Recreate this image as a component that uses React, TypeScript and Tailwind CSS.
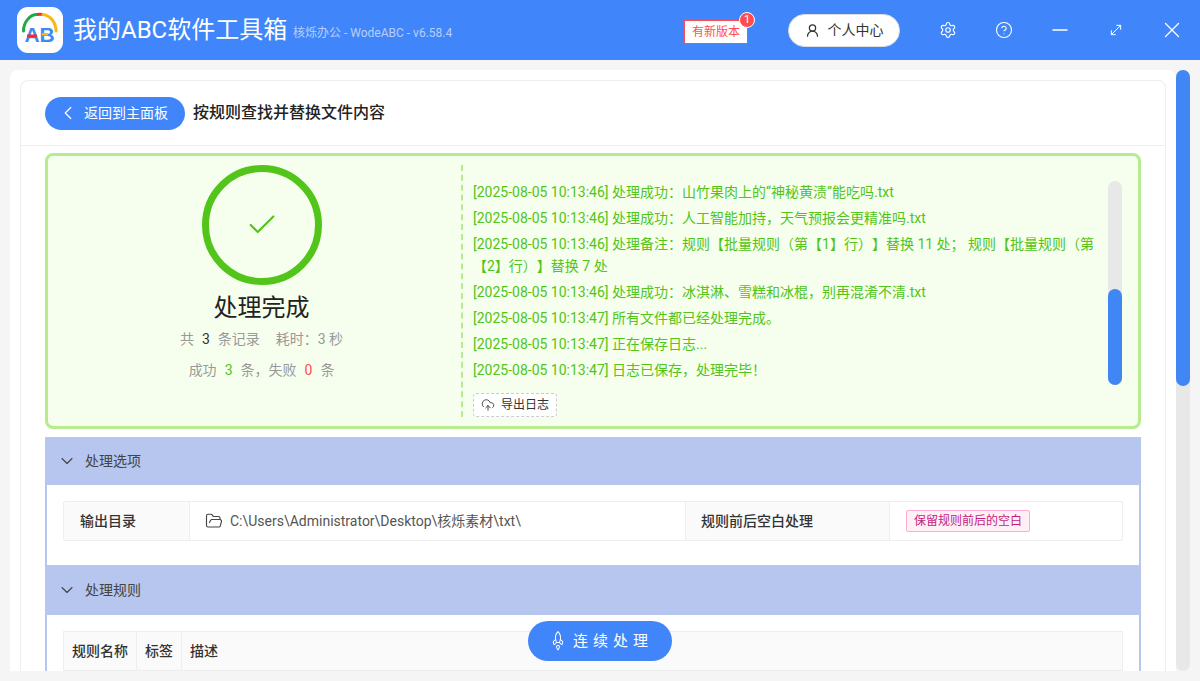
import React from "react";
import {
  ChevronDown,
  ChevronLeft,
  CircleHelp,
  CloudUpload,
  FolderOpen,
  Minus,
  MoveDiagonal,
  Rocket,
  Settings,
  Check,
  UserRound,
  X,
} from "lucide-react";

const font = "font-['Roboto','Noto_Sans_CJK_SC',sans-serif] [text-spacing-trim:space-all]";

const logs = [
  "[2025-08-05 10:13:46] 处理成功：山竹果肉上的“神秘黄渍”能吃吗.txt",
  "[2025-08-05 10:13:46] 处理成功：人工智能加持，天气预报会更精准吗.txt",
  "[2025-08-05 10:13:46] 处理备注：规则【批量规则（第【1】行）】替换 11 处； 规则【批量规则（第【2】行）】替换 7 处",
  "[2025-08-05 10:13:46] 处理成功：冰淇淋、雪糕和冰棍，别再混淆不清.txt",
  "[2025-08-05 10:13:47] 所有文件都已经处理完成。",
  "[2025-08-05 10:13:47] 正在保存日志...",
  "[2025-08-05 10:13:47] 日志已保存，处理完毕！",
];

const Logo = () => (
  <div className="h-[46px] w-[46px] shrink-0 rounded-[11px] bg-white">
    <svg viewBox="0 0 46 46" className="h-full w-full">
      <path d="M6.500 24C6.500 15 13 7.500 20 7.500" fill="none" stroke="#22a846" strokeWidth="3" strokeLinecap="round" />
      <path d="M20 7.500C22 7.200 24 7.200 26 7.500" fill="none" stroke="#e5342b" strokeWidth="3" />
      <path d="M26 7.500C33 8.500 39 15 39 24" fill="none" stroke="#f6b81a" strokeWidth="3" strokeLinecap="round" />
      <text x="7.500" y="35" fontSize="21" fontWeight="700" fontFamily="Liberation Sans" fill="#3d8bf2">A</text>
      <text x="22.500" y="35" fontSize="21" fontWeight="700" fontFamily="Liberation Sans" fill="#3d8bf2">B</text>
      <rect x="10" y="27.500" width="10" height="3" fill="#ef2b2b" />
      <rect x="25" y="26" width="6" height="2.500" fill="#f6b81a" />
    </svg>
  </div>
);

const Section = ({
  title,
  headerClass,
  children,
}: {
  title: string;
  headerClass: string;
  children: React.ReactNode;
}) => (
  <div className="border-x-2 border-[#b6c6ee] bg-white">
    <div className={`-mx-[2px] flex items-center gap-[8px] bg-[#b6c6ee] pl-[12px] text-[14px] text-[#444] ${headerClass}`}>
      <ChevronDown className="h-[20px] w-[20px]" strokeWidth={1.3} />
      {title}
    </div>
    {children}
  </div>
);

export default function App() {
  return (
    <div className={`${font} flex h-[681px] w-[1200px] flex-col overflow-hidden bg-[#f5f5f5]`}>
      {/* Title bar */}
      <header className="flex h-[60px] shrink-0 items-center bg-[#4086fa] pl-[17px] text-white">
        <Logo />
        <span className="ml-[10px] w-[212px] whitespace-nowrap text-[24px]">我的ABC软件工具箱</span>
        <span className="ml-[8px] mt-[6px] w-[164px] whitespace-nowrap text-[12px] text-[#b9cffa]">核烁办公 - WodeABC - v6.58.4</span>
        <div className="relative ml-[227px] mt-[4px] flex h-[24px] w-[64px] items-center justify-center border border-[#ff4d4f] bg-white text-[12px] text-[#ff4d4f]">
          有新版本
          <span className="absolute -right-[8px] -top-[9px] flex h-[16px] w-[16px] items-center justify-center rounded-full border border-white bg-[#ff4d4f] text-[11px] text-white">
            1
          </span>
        </div>
        <button className="ml-[40px] flex h-[33px] w-[112px] items-center justify-center gap-[8px] rounded-full border border-[#ddd] bg-white text-[14px] text-[#333]">
          <UserRound className="h-[15px] w-[15px]" />
          个人中心
        </button>
        <div className="ml-[20px] flex items-center">
          <div className="flex w-[56px] justify-center">
            <Settings className="h-[18px] w-[18px]" strokeWidth={1.5} />
          </div>
          <div className="flex w-[56px] justify-center">
            <CircleHelp className="h-[18px] w-[18px]" strokeWidth={1.5} />
          </div>
          <div className="flex w-[56px] justify-center">
            <Minus className="h-[24px] w-[24px]" strokeWidth={1.5} />
          </div>
          <div className="flex w-[56px] justify-center">
            <MoveDiagonal className="h-[16px] w-[16px]" strokeWidth={1.5} />
          </div>
          <div className="flex w-[56px] justify-center">
            <X className="h-[26px] w-[26px]" strokeWidth={1.2} />
          </div>
        </div>
      </header>

      <div className="flex min-h-0 flex-1 pl-[10px] pt-[10px] pb-[10px]">
        {/* Main panel */}
        <div className="relative w-[1166px] overflow-hidden rounded-t-[8px] bg-white pl-[10px] pt-[10px]">
          <div className="h-full w-[1146px] rounded-t-[8px] border-x border-t border-[#eee]">
            <div className="flex h-[65px] items-center border-b border-[#eee] pl-[24px]">
              <button className="flex h-[33px] w-[140px] items-center gap-[5px] rounded-full bg-[#4086fa] pl-[12px] text-[14px] text-white">
                <ChevronLeft className="h-[22px] w-[22px]" strokeWidth={1.3} />
                返回到主面板
              </button>
              <h1 className="ml-[8px] text-[16px] font-medium text-[#222]">按规则查找并替换文件内容</h1>
            </div>

            <div className="flex flex-col gap-[8px] pl-[24px] pr-[24px] pt-[7px]">
              {/* Result box */}
              <div className="flex h-[276px] rounded-[8px] border-[3px] border-[#b7eb8f] bg-[#f6ffed]">
                <div className="flex w-[413px] flex-col items-center pl-[14px] pt-[9px]">
                  <div className="flex h-[120px] w-[120px] items-center justify-center rounded-full border-[7px] border-[#52c41a]">
                    <Check className="h-[34px] w-[34px] text-[#52c41a]" strokeWidth={1.5} />
                  </div>
                  <div className="mt-[5px] text-[24px] leading-[36px] text-[#222]">处理完成</div>
                  <div className="mt-[3px] flex gap-[16px] text-[14px] leading-[20px] text-[#999]">
                    <span>
                      共<b className="mx-[8px] font-normal text-[#333]">3</b>条记录
                    </span>
                    <span>耗时：3 秒</span>
                  </div>
                  <div className="mt-[11px] text-[14px] leading-[20px] text-[#999]">
                    成功<b className="mx-[8px] font-normal text-[#52c41a]">3</b>条，失败
                    <b className="mx-[8px] font-normal text-[#ff4d4f]">0</b>条
                  </div>
                </div>
                <div className="my-[9px] flex flex-1 border-l-2 border-dashed border-[#b7eb8f] pl-[10px]">
                  <div className="w-[624px] pt-[16px] text-[14px] leading-[22px] text-[#52c41a]">
                    <div className="flex flex-col gap-[4px]">
                      {logs.map((line) => (
                        <p key={line}>{line}</p>
                      ))}
                    </div>
                    <button className="mt-[12px] flex h-[24px] w-[84px] items-center justify-center gap-[6px] rounded-[3px] border border-dashed border-[#ccc] bg-white text-[12px] text-[#333]">
                      <CloudUpload className="h-[14px] w-[14px]" strokeWidth={1.5} />
                      导出日志
                    </button>
                  </div>
                  <div className="ml-[11px] mt-[16px] h-[204px] w-[14px] rounded-full bg-[#e8e8e8] pt-[108px]">
                    <div className="h-[96px] rounded-full bg-[#4086f4]" />
                  </div>
                </div>
              </div>

              <div>
                <Section title="处理选项" headerClass="h-[48px]">
                  <div className="px-[16px] pb-[24px] pt-[16px]">
                    <div className="flex h-[40px] items-center rounded-[2px] border border-[#eee] text-[14px]">
                      <div className="flex h-full w-[126px] items-center border-r border-[#eee] bg-[#fafafa] pl-[16px] font-medium text-[#333]">
                        输出目录
                      </div>
                      <div className="flex h-full w-[495px] items-center gap-[7px] pl-[15px] text-[#555]">
                        <FolderOpen className="h-[18px] w-[18px] text-[#444]" strokeWidth={1.5} />
                        {"C:\\Users\\Administrator\\Desktop\\核烁素材\\txt\\"}
                      </div>
                      <div className="flex h-full w-[205px] items-center border-x border-[#eee] bg-[#fafafa] pl-[15px] font-medium text-[#333]">
                        规则前后空白处理
                      </div>
                      <div className="pl-[16px]">
                        <span className="flex h-[22px] w-[124px] items-center justify-center rounded-[2px] border border-[#ffadd2] bg-[#fff0f6] text-[12px] text-[#c41d7f]">
                          保留规则前后的空白
                        </span>
                      </div>
                    </div>
                  </div>
                </Section>
                <Section title="处理规则" headerClass="h-[50px]">
                  <div className="px-[16px] pt-[16px]">
                    <div className="flex h-[40px] items-center border border-[#eee] bg-[#fafafa] text-[14px] font-medium text-[#333]">
                      <div className="flex h-full w-[73px] items-center justify-center border-r border-[#eee]">规则名称</div>
                      <div className="flex h-full w-[45px] items-center justify-center border-r border-[#eee]">标签</div>
                      <div className="pl-[8px]">描述</div>
                    </div>
                  </div>
                </Section>
              </div>
            </div>
          </div>

          {/* Floating action */}
          <button className="absolute bottom-[10px] left-[518px] flex h-[40px] w-[144px] items-center gap-[7px] rounded-full bg-[#4086fa] pl-[22px] text-[15px] tracking-[5px] text-white">
            <Rocket className="h-[16px] w-[16px] -rotate-45" strokeWidth={1.5} />
            连续处理
          </button>
        </div>

        {/* Page scrollbar */}
        <div className="h-full w-[14px] rounded-full bg-[#e8e8e8]">
          <div className="h-[316px] rounded-full bg-[#4086f4]" />
        </div>
      </div>
    </div>
  );
}
